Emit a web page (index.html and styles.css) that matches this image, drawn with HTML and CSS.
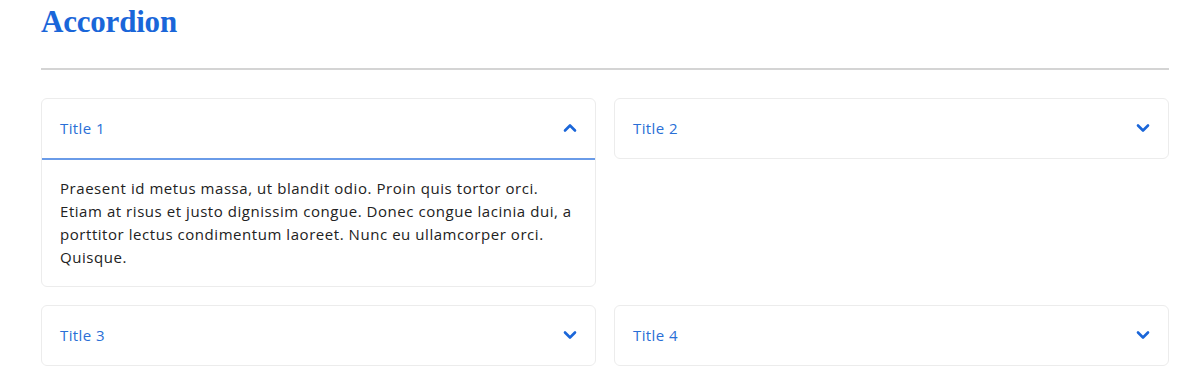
FILE: index.html
```html
<!DOCTYPE html>
<html>
<head>
<meta charset="utf-8">
<link rel="stylesheet" href="styles.css">
</head>
<body>
<div class="page">
  <h1 class="heading">Accordion</h1>
  <hr class="rule">
  <div class="grid">
    <div class="card open">
      <div class="card-head">
        <span class="card-title">Title 1</span>
        <svg class="chev" width="14" height="10" viewBox="0 0 14 10"><path d="M2 7.5 L7 2.5 L12 7.5" fill="none" stroke="#1a66d9" stroke-width="2.6" stroke-linecap="round" stroke-linejoin="round"/></svg>
      </div>
      <div class="card-body">Praesent id metus massa, ut blandit odio. Proin quis tortor orci. Etiam at risus et justo dignissim congue. Donec congue lacinia dui, a porttitor lectus condimentum laoreet. Nunc eu ullamcorper orci. Quisque.</div>
    </div>
    <div class="card">
      <div class="card-head">
        <span class="card-title">Title 2</span>
        <svg class="chev" width="14" height="10" viewBox="0 0 14 10"><path d="M2 2.5 L7 7.5 L12 2.5" fill="none" stroke="#1a66d9" stroke-width="2.6" stroke-linecap="round" stroke-linejoin="round"/></svg>
      </div>
    </div>
    <div class="card">
      <div class="card-head">
        <span class="card-title">Title 3</span>
        <svg class="chev" width="14" height="10" viewBox="0 0 14 10"><path d="M2 2.5 L7 7.5 L12 2.5" fill="none" stroke="#1a66d9" stroke-width="2.6" stroke-linecap="round" stroke-linejoin="round"/></svg>
      </div>
    </div>
    <div class="card">
      <div class="card-head">
        <span class="card-title">Title 4</span>
        <svg class="chev" width="14" height="10" viewBox="0 0 14 10"><path d="M2 2.5 L7 7.5 L12 2.5" fill="none" stroke="#1a66d9" stroke-width="2.6" stroke-linecap="round" stroke-linejoin="round"/></svg>
      </div>
    </div>
  </div>
</div>
</body>
</html>
```

FILE: styles.css
```css
* { box-sizing: border-box; }
html, body { margin: 0; padding: 0; background: #fff; }
body { font-family: "Open Sans", "Noto Sans", sans-serif; }
.page { padding: 0 31px 0 41px; }
.heading {
  margin: 0;
  padding-top: 4px;
  font-family: "Liberation Serif", serif;
  font-weight: 700;
  font-size: 31px;
  line-height: 36px;
  color: #1a66d9;
  letter-spacing: -0.2px;
}
.rule {
  margin: 28px 0 28px;
  border: 0;
  border-top: 2px solid #d4d4d4;
  height: 0;
}
.grid {
  display: grid;
  grid-template-columns: 1fr 1fr;
  gap: 18px;
  align-items: start;
}
.card {
  border: 1px solid #ececec;
  border-radius: 6px;
  background: #fff;
}
.card-head {
  height: 59px;
  display: flex;
  align-items: center;
  justify-content: space-between;
  padding: 0 18px 1px 18px;
}
.card.open .card-head {
  height: 61px;
  border-bottom: 2px solid #6a9be8;
}
.card-title {
  font-size: 15px;
  letter-spacing: 0.4px;
  color: #2a6fd6;
}
.chev { display: block; }
.card-body {
  padding: 17px 16px 17px 18px;
  font-size: 15px;
  letter-spacing: 0.55px;
  line-height: 23px;
  color: #222;
}
```
